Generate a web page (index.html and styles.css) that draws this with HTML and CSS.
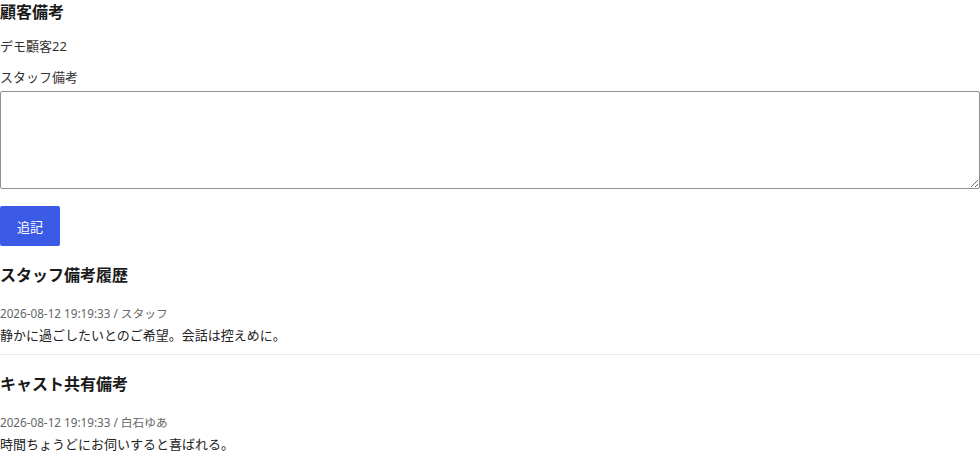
FILE: index.html
```html
<!DOCTYPE html>
<html lang="ja">
<head>
<meta charset="utf-8">
<link rel="stylesheet" href="styles.css">
</head>
<body>
<section class="notes">
  <h3 class="title">顧客備考</h3>
  <p class="customer">デモ顧客22</p>
  <label class="label" for="staff-note">スタッフ備考</label>
  <textarea id="staff-note" class="note-input"></textarea>
  <button class="btn" type="button">追記</button>

  <h3 class="title section-title">スタッフ備考履歴</h3>
  <div class="entry">
    <div class="meta">2026-08-12 19:19:33 / スタッフ</div>
    <div class="body">静かに過ごしたいとのご希望。会話は控えめに。</div>
  </div>

  <h3 class="title section-title">キャスト共有備考</h3>
  <div class="entry">
    <div class="meta">2026-08-12 19:19:33 / 白石ゆあ</div>
    <div class="body">時間ちょうどにお伺いすると喜ばれる。</div>
  </div>
</section>
</body>
</html>
```

FILE: styles.css
```css
* { box-sizing: border-box; }
html, body {
  margin: 0;
  padding: 0;
  background: #fff;
}
body {
  font-family: "Noto Sans", "Noto Sans CJK JP", sans-serif;
  color: #222;
  font-size: 13px;
}
.notes {
  display: flex;
  flex-direction: column;
  align-items: flex-start;
}
.title {
  margin: 0;
  font-size: 16px;
  font-weight: 700;
  line-height: 24px;
  color: #1a1a1a;
}
.customer {
  margin: 10px 0 0;
  line-height: 24px;
  color: #333;
}
.label {
  margin-top: 7px;
  line-height: 24px;
  color: #333;
}
.note-input {
  margin-top: 2px;
  width: 100%;
  height: 98px;
  border: 1px solid #8f8f8f;
  border-radius: 2px;
  font-family: inherit;
  resize: vertical;
}
.btn {
  margin-top: 17px;
  width: 60px;
  height: 40px;
  background: #3b5be6;
  color: #fff;
  border: none;
  border-radius: 2px;
  font-family: inherit;
  font-size: 13px;
  padding: 0;
}
.section-title {
  margin-top: 17px;
}
.entry {
  width: 100%;
  padding: 16px 0 9px;
  border-bottom: 1px solid #eaeaea;
}
.meta {
  font-size: 11.7px;
  color: #666;
  line-height: 20px;
}
.body {
  margin-top: 2px;
  line-height: 20px;
  color: #222;
}
```
